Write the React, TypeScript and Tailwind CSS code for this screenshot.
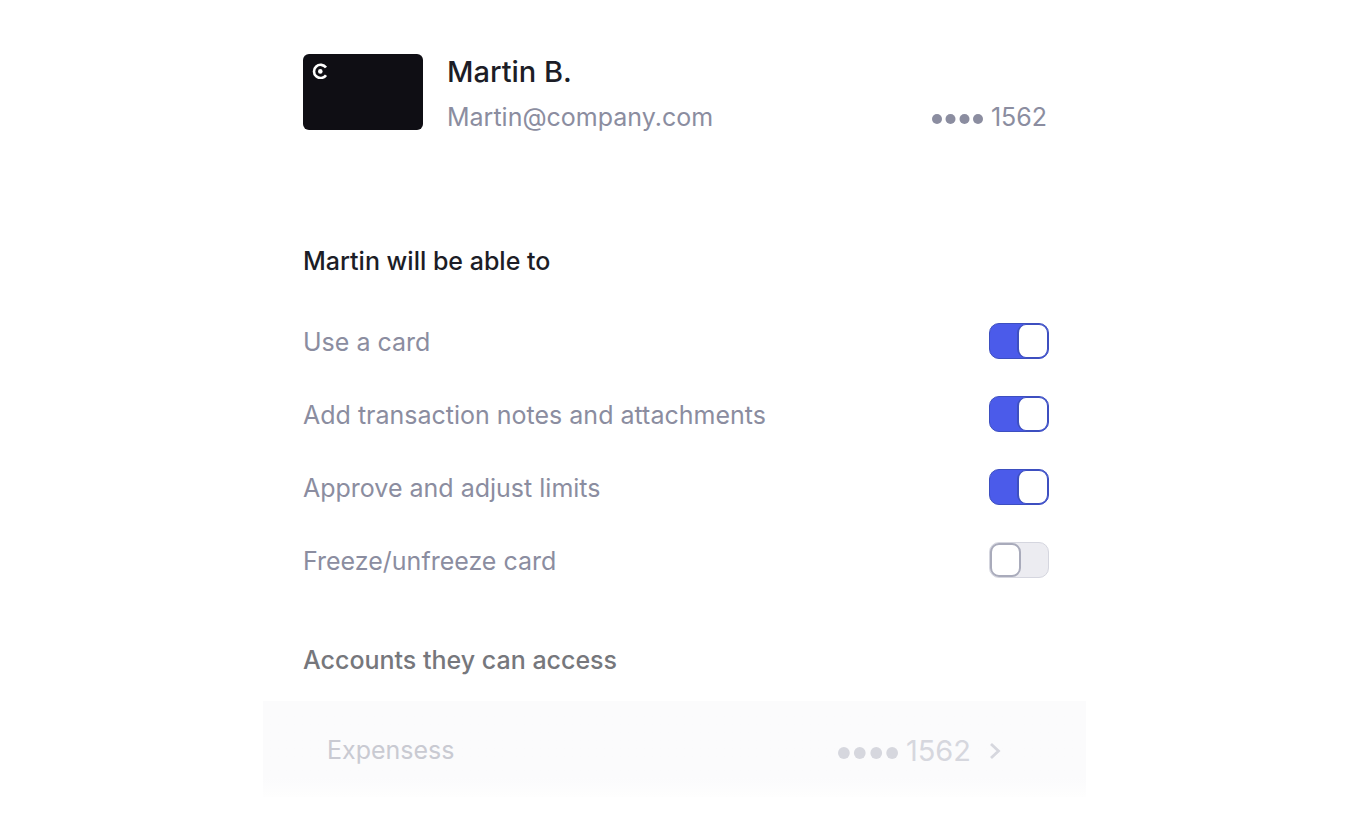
import { useState } from "react";

const PERMISSIONS = [
  { id: "use-card", label: "Use a card", enabled: true },
  { id: "notes", label: "Add transaction notes and attachments", enabled: true },
  { id: "limits", label: "Approve and adjust limits", enabled: true },
  { id: "freeze", label: "Freeze/unfreeze card", enabled: false },
];

export default function App() {
  return (
    <main className="px-10 pt-[54px] font-['Inter','Liberation_Sans',sans-serif] text-[#8b8da0]">
      <div className="mx-auto max-w-[746px]">
        <CardHolder />

        <section className="mt-[106px]">
          <h2 className="text-[25px] leading-10 font-medium text-[#1c1d26]">Martin will be able to</h2>
          <Permissions />
        </section>

        <section className="mt-[60px]">
          <h2 className="text-[25px] leading-10 font-medium text-[#76777c]">Accounts they can access</h2>
          <AccountRow name="Expensess" lastDigits="1562" />
        </section>
      </div>
    </main>
  );
}

function CardHolder() {
  return (
    <header className="flex items-start gap-6">
      <div className="h-[76px] w-[120px] shrink-0 rounded-md bg-[#0f0e14] p-[9px]">
        <svg viewBox="0 0 16 16" className="size-4" fill="none" aria-hidden="true">
          <path d="M14 4.6A6.6 6.6 0 1 0 14 12.2" stroke="white" strokeWidth="2.6" />
          <circle cx="8.3" cy="8.4" r="2.3" fill="white" />
        </svg>
      </div>
      <div className="min-w-0 flex-1">
        <h1 className="text-[29px] leading-9 font-medium text-[#1c1d26]">Martin B.</h1>
        <div className="mt-[9px] flex items-center justify-between pr-[2px] text-[25px] leading-9">
          <span>Martin@company.com</span>
          <span className="flex items-center gap-2">
            <Dots className="mt-1 h-[10px] w-[51px]" />
            1562
          </span>
        </div>
      </div>
    </header>
  );
}

function Permissions() {
  const [permissions, setPermissions] = useState(PERMISSIONS);

  const toggle = (id: string) =>
    setPermissions(permissions.map((p) => (p.id === id ? { ...p, enabled: !p.enabled } : p)));

  return (
    <ul className="mt-[42px] space-y-[35px]">
      {permissions.map((p) => (
        <li key={p.id} className="flex items-start justify-between">
          <label htmlFor={p.id} className="text-[25px] leading-[38px]">
            {p.label}
          </label>
          <input
            id={p.id}
            type="checkbox"
            role="switch"
            checked={p.enabled}
            onChange={() => toggle(p.id)}
            className="flex h-9 w-[60px] shrink-0 cursor-pointer appearance-none rounded-[10px] border border-[#d5d6df] bg-[#ececf1] before:block before:h-full before:w-[31px] before:rounded-[9px] before:border-2 before:border-[#a9abbb] before:bg-white checked:justify-end checked:border-[#3d4fc0] checked:bg-[#4b5bea] checked:before:border checked:before:border-l-2 checked:before:border-[#3d4fc0]"
          />
        </li>
      ))}
    </ul>
  );
}

function AccountRow({ name, lastDigits }: { name: string; lastDigits: string }) {
  return (
    <button
      type="button"
      className="mt-[21px] -ml-10 flex h-[96px] w-[calc(100%+77px)] cursor-pointer items-center justify-between bg-linear-to-b from-[#fbfbfc] from-80% to-[#fefefe] pt-1 pr-[85px] pl-16 text-[#c9cad2]"
    >
      <span className="text-[25px]">{name}</span>
      <span className="flex items-center text-[29px] text-[#d6d7de]">
        <Dots className="mt-1 mr-2 h-3 w-[60px]" />
        {lastDigits}
        <svg viewBox="0 0 12 18" className="ml-[18px] h-[18px] w-3" fill="none" aria-hidden="true">
          <path d="M2 2L9.5 9L2 16" stroke="currentColor" strokeWidth="2.8" />
        </svg>
      </span>
    </button>
  );
}

function Dots({ className }: { className: string }) {
  return (
    <svg viewBox="0 0 51 10" className={className} fill="currentColor" aria-hidden="true">
      <circle cx="5" cy="5" r="5" />
      <circle cx="18.5" cy="5" r="5" />
      <circle cx="32.5" cy="5" r="5" />
      <circle cx="46" cy="5" r="5" />
    </svg>
  );
}
